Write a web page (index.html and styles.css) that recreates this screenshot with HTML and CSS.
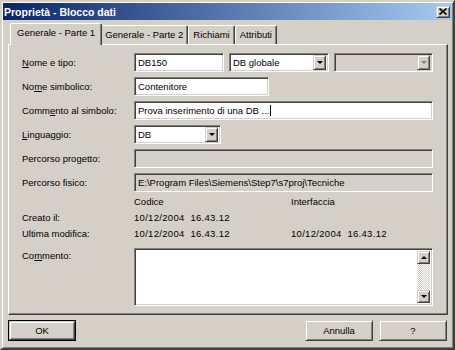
FILE: index.html
```html
<!DOCTYPE html>
<html lang="it">

<head>
    <meta charset="UTF-8">
    <title>Proprietà - Blocco dati</title>

    <link rel="stylesheet" href="styles.css">
</head>

<body>
    <div class="window">
        <div class="titlebar">
            <span class="title">Proprietà - Blocco dati</span>
            <span class="close raised">
                <svg width="8" height="7" viewBox="0 0 8 7">
                    <path d="M0.5 0.5 L7.5 6.5 M7.5 0.5 L0.5 6.5" stroke="#000" stroke-width="1.6" fill="none" />
                </svg>
            </span>
        </div>

        <div class="client">
            <div class="tabs">
                <div class="tab active">Generale - Parte 1</div>
                <div class="tab">Generale - Parte 2</div>
                <div class="tab">Richiami</div>
                <div class="tab">Attributi</div>
            </div>

            <div class="panel">
                <div class="form">
                    <div class="lbl"><u>N</u>ome e tipo:</div>
                    <div class="fields">
                        <div class="edit sunken w-name">DB150</div>
                        <div class="combo sunken w-type">
                            <span class="combo-text">DB globale</span>
                            <span class="drop raised"><span class="tri"></span></span>
                        </div>
                        <div class="combo sunken disabled grow">
                            <span class="combo-text"></span>
                            <span class="drop raised"><span class="tri"></span></span>
                        </div>
                    </div>

                    <div class="lbl">No<u>m</u>e simbolico:</div>
                    <div class="fields">
                        <div class="edit sunken w-sym">Contenitore</div>
                    </div>

                    <div class="lbl">Comm<u>e</u>nto al simbolo:</div>
                    <div class="fields">
                        <div class="edit sunken grow">Prova inserimento di una DB ...<span class="caret"></span></div>
                    </div>

                    <div class="lbl"><u>L</u>inguaggio:</div>
                    <div class="fields">
                        <div class="combo sunken w-lang">
                            <span class="combo-text">DB</span>
                            <span class="drop raised"><span class="tri"></span></span>
                        </div>
                    </div>

                    <div class="lbl">Percorso progetto:</div>
                    <div class="fields">
                        <div class="edit sunken readonly grow"></div>
                    </div>

                    <div class="lbl">Percorso fisico:</div>
                    <div class="fields">
                        <div class="edit sunken readonly grow">E:\Program Files\Siemens\Step7\s7proj\Tecniche</div>
                    </div>
                </div>

                <div class="dates">
                    <div></div>
                    <div>Codice</div>
                    <div>Interfaccia</div>

                    <div>Creato il:</div>
                    <div class="stamp">10/12/2004&nbsp;&nbsp;16.43.12</div>
                    <div></div>

                    <div>Ultima modifica:</div>
                    <div class="stamp">10/12/2004&nbsp;&nbsp;16.43.12</div>
                    <div class="stamp">10/12/2004&nbsp;&nbsp;16.43.12</div>
                </div>

                <div class="comment">
                    <div class="lbl">Co<u>m</u>mento:</div>
                    <div class="memo sunken">
                        <div class="memo-text"></div>
                        <div class="scrollbar">
                            <span class="sb-btn raised"><span class="tri up"></span></span>
                            <span class="sb-track"></span>
                            <span class="sb-btn raised"><span class="tri"></span></span>
                        </div>
                    </div>
                </div>
            </div>

            <div class="buttons">
                <div class="btn default"><span class="raised">OK</span></div>
                <div class="spacer"></div>
                <div class="btn"><span class="raised">Annulla</span></div>
                <div class="btn"><span class="raised">?</span></div>
            </div>
        </div>
    </div>
</body>

</html>
```

FILE: styles.css
```css
* {
    box-sizing: border-box;
}

body {
    margin: 0;
    background-color: #d4d0c8;
    font-family: 'Liberation Sans', Arial, sans-serif;
    font-size: 9.5px;
    color: #000;
}

u {
    text-decoration-thickness: 1px;
    text-underline-offset: 1px;
}

/* classic 3D edges */
.raised {
    background-color: #d4d0c8;
    border: 1px solid;
    border-color: #d4d0c8 #404040 #404040 #d4d0c8;
    box-shadow: inset 1px 1px 0 #fff, inset -1px -1px 0 #808080;
}

.sunken {
    background-color: #fff;
    border: 1px solid;
    border-color: #808080 #fff #fff #808080;
    box-shadow: inset 1px 1px 0 #404040, inset -1px -1px 0 #d4d0c8;
}

.window {
    width: 455px;
    height: 350px;
    display: flex;
    flex-direction: column;
    padding: 1px;
    border: 2px solid;
    border-color: #d4d0c8 #404040 #404040 #d4d0c8;
    box-shadow: inset 1px 1px 0 #fff, inset -1px -1px 0 #808080;
}

.titlebar {
    height: 17px;
    flex: none;
    display: flex;
    align-items: center;
    justify-content: space-between;
    padding: 0 2px 0 1px;
    background: linear-gradient(to right, #0a246a, #a6caf0);
}

.title {
    color: #fff;
    font-weight: bold;
    font-size: 10.5px;
}

.close {
    width: 14px;
    height: 12px;
    display: flex;
    align-items: center;
    justify-content: center;
}

.client {
    flex: 1;
    display: flex;
    flex-direction: column;
    padding: 3px 4px 0 5px;
}

.tabs {
    display: flex;
    align-items: flex-end;
    height: 21px;
    padding-left: 4px;
}

.tab {
    height: 19px;
    padding: 0 4px;
    line-height: 17px;
    border: 1px solid;
    border-color: #fff #404040 transparent #fff;
    border-bottom: none;
    border-radius: 2px 2px 0 0;
    box-shadow: inset -1px 0 0 #808080;
    background-color: #d4d0c8;
}

.tab.active {
    position: relative;
    z-index: 1;
    height: 22px;
    margin: 0 -2px -1px;
    padding: 0 6px;
    line-height: 18px;
}

.panel {
    height: 271px;
    padding: 8px 14px 0 13px;
    border: 1px solid;
    border-color: #fff #404040 #404040 #fff;
    box-shadow: inset -1px -1px 0 #808080;
}

.form {
    display: grid;
    grid-template-columns: 112px 1fr;
    grid-auto-rows: 19px;
    row-gap: 5px;
    align-items: center;
}

.fields {
    display: flex;
    gap: 5px;
    height: 19px;
}

.edit,
.combo {
    height: 19px;
    padding: 0 3px;
    line-height: 17px;
    white-space: nowrap;
    overflow: hidden;
}

.grow {
    flex: 1;
}

.w-name {
    width: 90px;
}

.w-type {
    width: 100px;
}

.w-sym {
    width: 135px;
}

.w-lang {
    width: 87px;
}

.readonly,
.disabled {
    background-color: #d4d0c8;
}

.caret {
    display: inline-block;
    width: 1px;
    height: 11px;
    margin-left: 1px;
    vertical-align: -2px;
    background-color: #000;
}

.combo {
    display: flex;
    align-items: center;
    padding-right: 2px;
}

.combo-text {
    flex: 1;
}

.drop {
    width: 13px;
    height: 15px;
    display: flex;
    align-items: center;
    justify-content: center;
}

.tri {
    width: 0;
    height: 0;
    border-left: 3px solid transparent;
    border-right: 3px solid transparent;
    border-top: 3px solid #000;
}

.tri.up {
    border-top: none;
    border-bottom: 3px solid #000;
}

.disabled .tri {
    border-top-color: #808080;
}

.dates {
    display: grid;
    grid-template-columns: 112px 157px 1fr;
    grid-auto-rows: 16px;
    align-items: center;
    margin-top: 1px;
}

.stamp {
    letter-spacing: 0.3px;
}

.comment {
    display: grid;
    grid-template-columns: 112px 1fr;
    margin-top: 7px;
}

.comment .lbl {
    padding-top: 2px;
}

.memo {
    height: 58px;
    display: flex;
    padding: 2px;
}

.memo-text {
    flex: 1;
}

.scrollbar {
    width: 13px;
    display: flex;
    flex-direction: column;
}

.sb-btn {
    height: 13px;
    display: flex;
    align-items: center;
    justify-content: center;
}

.sb-track {
    flex: 1;
    background-color: #eae8e4;
    background-image: repeating-conic-gradient(#fff 0 25%, #d4d0c8 0 50%);
    background-size: 2px 2px;
}

.buttons {
    display: flex;
    gap: 6px;
    margin-top: 5px;
    padding-right: 1px;
}

.spacer {
    flex: 1;
}

.btn {
    width: 68px;
    height: 21px;
    display: flex;
}

.btn .raised {
    flex: 1;
    display: flex;
    align-items: center;
    justify-content: center;
}

.btn.default {
    border: 1px solid #000;
}
```
